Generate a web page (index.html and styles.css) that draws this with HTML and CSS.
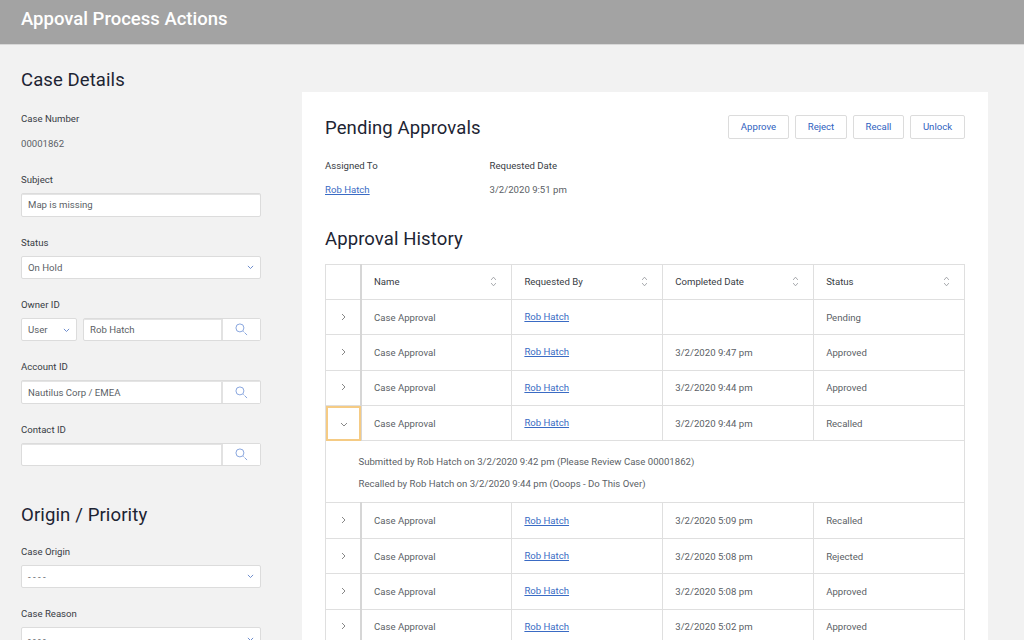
FILE: index.html
```html
<!DOCTYPE html>
<html lang="en">
<head>
<meta charset="utf-8">
<title>Appoval Process Actions</title>
<link rel="stylesheet" href="styles.css">
</head>
<body>
<svg class="defs" width="0" height="0" aria-hidden="true">
  <symbol id="search" viewBox="0 0 14 14"><circle cx="5.3" cy="5.3" r="4.3" fill="none" stroke="currentColor" stroke-width="1"/><path d="M9 9l1 1M10.5 10.5l2.5 2.5" fill="none" stroke="currentColor" stroke-width="1"/></symbol>
  <symbol id="down" viewBox="0 0 8 5"><path d="M1 1l3 3 3-3" fill="none" stroke="currentColor" stroke-width="1"/></symbol>
  <symbol id="right" viewBox="0 0 5 8"><path d="M1 1l3 3-3 3" fill="none" stroke="currentColor" stroke-width="1"/></symbol>
  <symbol id="sort" viewBox="0 0 8 14"><path d="M1 5l3-3.5L7 5M1 9l3 3.5L7 9" fill="none" stroke="currentColor" stroke-width="1"/></symbol>
</svg>
<header class="topbar"><h1>Appoval Process Actions</h1></header>
<div class="layout">
  <aside class="sidebar">
    <h2 class="sec-title">Case Details</h2>
    <div class="field"><div class="label">Case Number</div><div class="static">00001862</div></div>
    <div class="field"><div class="label">Subject</div><div class="control"><span class="val">Map is missing</span></div></div>
    <div class="field"><div class="label">Status</div><div class="control select"><span class="val">On Hold</span><svg class="chev"><use href="#down"/></svg></div></div>
    <div class="field"><div class="label">Owner ID</div>
      <div class="combo">
        <div class="control select small"><span class="val">User</span><svg class="chev"><use href="#down"/></svg></div>
        <div class="control lookup"><span class="val">Rob Hatch</span><span class="lookup-btn"><svg class="glass"><use href="#search"/></svg></span></div>
      </div>
    </div>
    <div class="field"><div class="label">Account ID</div><div class="control lookup"><span class="val">Nautilus Corp / EMEA</span><span class="lookup-btn"><svg class="glass"><use href="#search"/></svg></span></div></div>
    <div class="field"><div class="label">Contact ID</div><div class="control lookup"><span class="val"></span><span class="lookup-btn"><svg class="glass"><use href="#search"/></svg></span></div></div>
    <h2 class="sec-title second">Origin / Priority</h2>
    <div class="field"><div class="label">Case Origin</div><div class="control select"><span class="val">- - - -</span><svg class="chev"><use href="#down"/></svg></div></div>
    <div class="field"><div class="label">Case Reason</div><div class="control select"><span class="val">- - - -</span><svg class="chev"><use href="#down"/></svg></div></div>
  </aside>
  <main class="panel">
    <div class="panel-head">
      <h2 class="panel-title">Pending Approvals</h2>
      <div class="actions">
        <a class="btn btn-approve">Approve</a><a class="btn btn-reject">Reject</a><a class="btn btn-recall">Recall</a><a class="btn btn-unlock">Unlock</a>
      </div>
    </div>
    <div class="pending">
      <div class="pending-col"><div class="label">Assigned To</div><a class="link">Rob Hatch</a></div>
      <div class="pending-col"><div class="label">Requested Date</div><div class="static">3/2/2020 9:51 pm</div></div>
    </div>
    <h2 class="panel-title history">Approval History</h2>
    <table class="grid">
      <colgroup><col class="c0"><col><col><col><col></colgroup>
      <thead>
        <tr>
          <th class="tog"></th>
          <th><div class="th-in">Name<svg class="sort"><use href="#sort"/></svg></div></th>
          <th><div class="th-in">Requested By<svg class="sort"><use href="#sort"/></svg></div></th>
          <th><div class="th-in">Completed Date<svg class="sort"><use href="#sort"/></svg></div></th>
          <th><div class="th-in">Status<svg class="sort"><use href="#sort"/></svg></div></th>
        </tr>
      </thead>
      <tbody>
        <tr><td class="tog"><svg class="arrow"><use href="#right"/></svg></td><td>Case Approval</td><td><a class="link">Rob Hatch</a></td><td></td><td>Pending</td></tr>
        <tr><td class="tog"><svg class="arrow"><use href="#right"/></svg></td><td>Case Approval</td><td><a class="link">Rob Hatch</a></td><td>3/2/2020 9:47 pm</td><td>Approved</td></tr>
        <tr><td class="tog"><svg class="arrow"><use href="#right"/></svg></td><td>Case Approval</td><td><a class="link">Rob Hatch</a></td><td>3/2/2020 9:44 pm</td><td>Approved</td></tr>
        <tr><td class="tog focus"><svg class="arrow-d"><use href="#down"/></svg></td><td>Case Approval</td><td><a class="link">Rob Hatch</a></td><td>3/2/2020 9:44 pm</td><td>Recalled</td></tr>
        <tr class="detail"><td colspan="5"><p>Submitted by Rob Hatch on 3/2/2020 9:42 pm (Please Review Case 00001862)</p><p>Recalled by Rob Hatch on 3/2/2020 9:44 pm (Ooops - Do This Over)</p></td></tr>
        <tr><td class="tog"><svg class="arrow"><use href="#right"/></svg></td><td>Case Approval</td><td><a class="link">Rob Hatch</a></td><td>3/2/2020 5:09 pm</td><td>Recalled</td></tr>
        <tr><td class="tog"><svg class="arrow"><use href="#right"/></svg></td><td>Case Approval</td><td><a class="link">Rob Hatch</a></td><td>3/2/2020 5:08 pm</td><td>Rejected</td></tr>
        <tr><td class="tog"><svg class="arrow"><use href="#right"/></svg></td><td>Case Approval</td><td><a class="link">Rob Hatch</a></td><td>3/2/2020 5:08 pm</td><td>Approved</td></tr>
        <tr><td class="tog"><svg class="arrow"><use href="#right"/></svg></td><td>Case Approval</td><td><a class="link">Rob Hatch</a></td><td>3/2/2020 5:02 pm</td><td>Approved</td></tr>
      </tbody>
    </table>
  </main>
</div>
</body>
</html>
```
FILE: styles.css
```css
* { box-sizing: border-box; }
html, body { margin: 0; height: 640px; overflow: hidden; }
body { background: #f2f2f2; font-family: Roboto, "Liberation Sans", sans-serif; font-size: 9.6px; color: #5b5f66; }
.defs { position: absolute; }
.topbar { height: 44px; background: #a3a3a3; padding: 0 21px; display: flex; align-items: center; box-shadow: 0 1px 0 #d8d8d8; }
.topbar h1 { margin: 0 0 7px; font-size: 18.5px; font-weight: 500; color: #fff; letter-spacing: 0; }
.layout { display: flex; align-items: flex-start; }
.sidebar { width: 302px; padding: 25px 41px 0 21px; flex: none; }
.sec-title { margin: 0 0 22px; font-size: 18.5px; line-height: 22px; font-weight: 400; color: #1d2433; letter-spacing: .1px; }
.sec-title.second { margin: 37.6px 0 20px; font-size: 18.6px; }
.label { color: #383c44; line-height: 12px; margin-bottom: 7px; }
.static { line-height: 12px; padding-top: 6px; }
.field { margin-bottom: 20px; }
.field:first-of-type { margin-bottom: 24.3px; }
.control { display: flex; align-items: center; height: 23.4px; background: #fff; border: 1px solid #dcdcdc; border-radius: 2px; padding-left: 6px; box-shadow: inset 0 1px 0 #e4e4e4; }
.control .val { flex: 1; }
.select { padding-right: 6px; box-shadow: none; }
.chev { width: 7px; height: 4.4px; color: #5b7fc7; flex: none; }
.combo { display: flex; gap: 6px; }
.small { width: 56px; flex: none; }
.combo .lookup { flex: 1; }
.lookup { padding-left: 6px; }
.lookup-btn { width: 39px; height: 21px; flex: none; display: flex; align-items: center; justify-content: center; border-left: 2px solid #e2e2e2; background: #fff; }
.glass { width: 13px; height: 13px; color: #7f9fdb; }
.panel { width: 686px; height: 560px; margin-top: 48px; background: #fff; padding: 23px; flex: none; overflow: hidden; }
.panel-head { display: flex; justify-content: space-between; align-items: flex-start; height: 26px; }
.panel-title { margin: 0; font-size: 18.5px; line-height: 26px; font-weight: 400; color: #1d2433; letter-spacing: .1px; }
.actions { display: flex; gap: 6px; }
.btn { display: flex; align-items: center; justify-content: center; height: 23.5px; border: 1px solid #dcdcdc; border-radius: 2px; color: #2f62c0; }
.btn-approve { width: 61px; }
.btn-reject { width: 52px; }
.btn-recall { width: 51px; }
.btn-unlock { width: 55px; }
.pending { display: flex; margin-top: 19px; }
.pending-col { width: 164.5px; }
.pending .label { margin-bottom: 12px; }
.pending .static { padding-top: 0; }
.link { color: #3a6bc4; text-decoration: underline; line-height: 12px; display: inline-block; }
.history { margin-top: 30px; }
.grid { width: 640px; margin-top: 11.5px; table-layout: fixed; border-collapse: collapse; }
.c0 { width: 35.5px; }
.grid th, .grid td { height: 35.4px; padding: 0 14px 0 12px; border: 1px solid #dfdfdf; text-align: left; font-weight: 400; }
.grid th { color: #383c44; }
.th-in { display: flex; align-items: center; justify-content: space-between; }
.sort { width: 7px; height: 11px; color: #909398; }
.grid .tog { padding: 0 0 0 1px; text-align: center; border-right: 2px solid #d6d6d6; }
.arrow { width: 5px; height: 8px; color: #888; }
.arrow-d { width: 8px; height: 5px; color: #888; }
.grid .focus { outline: 2px solid #f5cb84; outline-offset: -2px; }
.detail td { height: 62px; padding: 2px 32.5px 0; }
.detail p { margin: 0; line-height: 12px; }
.detail p + p { margin-top: 10px; }
```
